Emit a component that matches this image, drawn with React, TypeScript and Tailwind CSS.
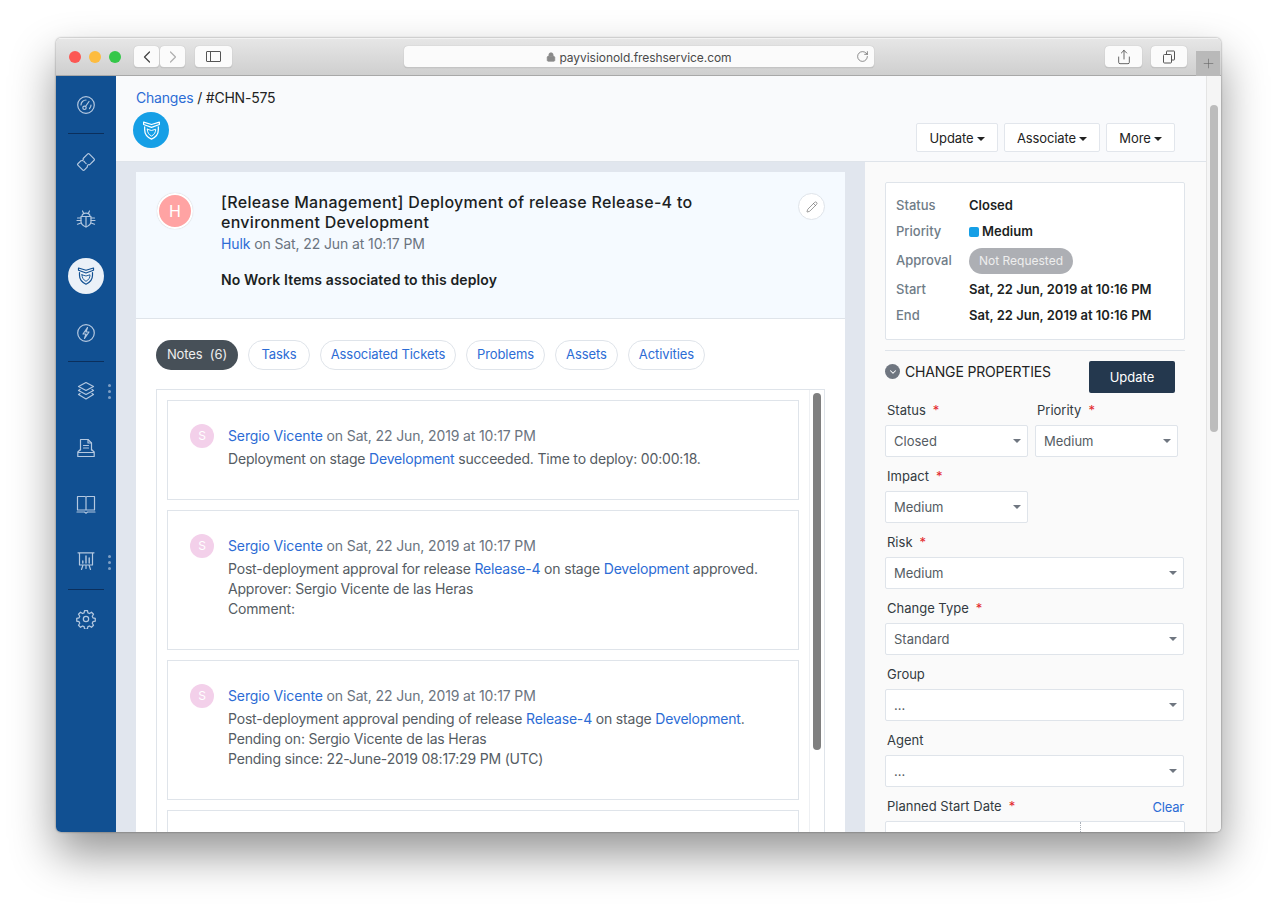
import React from "react";
import {
  ChevronDown,
  ChevronLeft,
  ChevronRight,
  Lock,
  Pencil,
  Plus,
  RotateCw,
  Share,
} from "lucide-react";

const iconProps = {
  fill: "none",
  stroke: "currentColor",
  strokeWidth: 1.2,
  strokeLinecap: "round" as const,
  strokeLinejoin: "round" as const,
};

function ShieldIcon({ size = 20 }: { size?: number }) {
  return (
    <svg width={size} height={size} viewBox="0 0 20 20" {...iconProps}>
      <path d="M2.500 2 10 4.300 17.500 2v2.300L10 7 2.500 4.300z" />
      <path d="M3.500 6.500v2.700c0 4 2.200 7 6.500 9 4.300-2 6.500-5 6.500-9V6.500" />
      <path d="M6 8.800 10 10l4-1.200c0 3-1.300 5-4 6.500-2.700-1.500-4-3.500-4-6.500z" strokeWidth={0.9} />
    </svg>
  );
}

function Gauge() {
  return (
    <svg width="20" height="20" viewBox="0 0 20 20" {...iconProps}>
      <circle cx="10" cy="10" r="8.300" />
      <circle cx="8.500" cy="12.800" r="1.700" />
      <path d="m9.500 11.500 3.500-5M5 10a5 5 0 0 1 5-5M13.500 13.500a5 5 0 0 0 1.500-3.500" />
    </svg>
  );
}

function Ticket() {
  return (
    <svg width="20" height="20" viewBox="0 0 20 20" {...iconProps}>
      <g transform="rotate(-45 10 10)">
        <path d="M2 6.500c0-.600.400-1 1-1h4.500a1.600 1.600 0 0 0 3 0H17c.600 0 1 .400 1 1v7c0 .600-.400 1-1 1h-6.500a1.600 1.600 0 0 0-3 0H3c-.600 0-1-.400-1-1z" />
        <path d="M9 8v4" strokeDasharray="1 1.200" />
      </g>
    </svg>
  );
}

function Bug() {
  return (
    <svg width="20" height="20" viewBox="0 0 20 20" {...iconProps}>
      <path d="M5 7.500h10v5c0 2.400-2.200 4.300-5 5.500-2.800-1.200-5-3.100-5-5.500z" />
      <path d="M6 7.500C6 5.500 7.800 4.200 10 4.200s4 1.300 4 3.300M6.500 2l1.300 2.600M13.500 2l-1.300 2.600M10 7.500v10.300" />
      <path d="M5 9H1.500M5 11.500H1M5 14l-3.500 1.200M15 9h3.500M15 11.500h4M15 14l3.500 1.200" />
    </svg>
  );
}

function Bolt() {
  return (
    <svg width="20" height="20" viewBox="0 0 20 20" {...iconProps}>
      <circle cx="10" cy="10" r="8.300" />
      <path d="M11.500 4.500 7 11h3l-1.500 4.500L13 9h-3z" />
    </svg>
  );
}

function Layers() {
  return (
    <svg width="20" height="20" viewBox="0 0 20 20" {...iconProps}>
      <path d="m10 1.500 7.500 4L10 9.500l-7.500-4z" />
      <path d="m4 8.500-1.500 1L10 13.500l7.500-4-1.500-1" />
      <path d="m4 12.500-1.500 1L10 18l7.500-4.500-1.500-1" />
    </svg>
  );
}

function Inbox() {
  return (
    <svg width="20" height="20" viewBox="0 0 20 20" {...iconProps}>
      <path d="M4.500 12V1.500h7.500l3.500 3.500v7" />
      <path d="M12 1.500V5h3.500M7.500 7.500h5M7.500 10h5" />
      <path d="M4.500 11.500 1.800 14v4.500h16.400V14l-2.700-2.500M1.800 14.500h16.400" />
    </svg>
  );
}

function Book() {
  return (
    <svg width="20" height="20" viewBox="0 0 20 20" {...iconProps}>
      <path d="M1.500 1.500H9c.600 0 1 .400 1 1V15H1.500zM18.500 1.500H11c-.600 0-1 .400-1 1V15h8.500z" />
      <path d="M1 17h7.500l1.500 1.200 1.500-1.200H19" />
    </svg>
  );
}

function Presentation() {
  return (
    <svg width="20" height="20" viewBox="0 0 20 20" {...iconProps}>
      <path d="M2 1.800h16M3.500 1.800V14h13V1.800M7 14l-1.500 4.500M13 14l1.500 4.500M10 14v3.500" />
      <path d="M6.800 12v-2M10 12V5M13.200 12V7" strokeWidth={1.4} />
    </svg>
  );
}

function Gear() {
  return (
    <svg width="20" height="20" viewBox="0 0 24 24" {...iconProps} strokeWidth={1.5}>
      <circle cx="12" cy="12" r="3.200" />
      <path d="M10.300 1.800h3.400l.600 2.800 1.900.800 2.400-1.500 2.400 2.400-1.500 2.400.800 1.900 2.800.600v3.400l-2.800.600-.800 1.900 1.500 2.400-2.400 2.400-2.400-1.500-1.900.800-.600 2.800h-3.400l-.600-2.800-1.900-.800-2.400 1.500-2.400-2.400 1.500-2.400-.800-1.900-2.800-.600v-3.400l2.800-.600.800-1.900-1.500-2.400 2.400-2.400 2.400 1.500 1.900-.800z" />
    </svg>
  );
}

function SideItem({
  height,
  children,
  dots,
}: {
  height: string;
  children: React.ReactNode;
  dots?: boolean;
}) {
  return (
    <div className={`relative flex items-center justify-center text-[#b4c8e0] ${height}`}>
      {children}
      {dots && (
        <div className="absolute top-[22px] right-[5px] flex flex-col gap-[3px]">
          <span className="h-[3px] w-[3px] rounded-full bg-[#7f9fc4]" />
          <span className="h-[3px] w-[3px] rounded-full bg-[#7f9fc4]" />
          <span className="h-[3px] w-[3px] rounded-full bg-[#7f9fc4]" />
        </div>
      )}
    </div>
  );
}

function SideDivider() {
  return <div className="mx-3 h-px bg-[#0b2f5c]" />;
}

function Sidebar() {
  return (
    <div className="flex w-[60px] shrink-0 flex-col bg-[#115092]">
      <SideItem height="h-[57px]"><Gauge /></SideItem>
      <SideDivider />
      <SideItem height="h-[56px]"><Ticket /></SideItem>
      <SideItem height="h-[57px]"><Bug /></SideItem>
      <SideItem height="h-[57px]">
        <div className="flex h-9 w-9 items-center justify-center rounded-full bg-[#ebf1f8] text-[#115092]">
          <ShieldIcon />
        </div>
      </SideItem>
      <SideItem height="h-[57px]"><Bolt /></SideItem>
      <SideDivider />
      <SideItem height="h-[57px]" dots><Layers /></SideItem>
      <SideItem height="h-[57px]"><Inbox /></SideItem>
      <SideItem height="h-[57px]"><Book /></SideItem>
      <SideItem height="h-[56px]" dots><Presentation /></SideItem>
      <SideDivider />
      <SideItem height="h-[57px]"><Gear /></SideItem>
    </div>
  );
}

function ToolbarButton({ className, children }: { className: string; children: React.ReactNode }) {
  return (
    <div className={`flex h-[22px] items-center justify-center rounded-[4px] border-b border-[#c4c4c4] bg-[#fbfbfb] shadow-[0_0_1px_rgba(0,0,0,0.25)] ${className}`}>
      {children}
    </div>
  );
}

function TabsGlyph() {
  return (
    <svg width="14" height="14" viewBox="0 0 14 14" fill="none" stroke="#555555" strokeWidth="1">
      <rect x="1.500" y="4.500" width="8" height="8.500" rx="1" />
      <path d="M4.500 4.500v-3c0-.300.200-.500.500-.500h7c.300 0 .500.200.500.500v8c0 .300-.200.500-.500.500H9.500" />
    </svg>
  );
}

function Toolbar() {
  return (
    <div className="flex h-[38px] shrink-0 items-center border-t border-b border-t-[#f2f2f2] border-b-[#a8a8a8] bg-gradient-to-b from-[#e6e6e6] to-[#cfcfcf] pl-[13px]">
      <span className="h-3 w-3 rounded-full bg-[#fc5753]" />
      <span className="ml-2 h-3 w-3 rounded-full bg-[#fdbc40]" />
      <span className="ml-2 h-3 w-3 rounded-full bg-[#34c749]" />
      <ToolbarButton className="ml-[13px] w-[25px]">
        <ChevronLeft size={20} strokeWidth={1.5} className="text-[#444444]" />
      </ToolbarButton>
      <ToolbarButton className="ml-px w-[25px]">
        <ChevronRight size={20} strokeWidth={1.5} className="text-[#b0b0b0]" />
      </ToolbarButton>
      <ToolbarButton className="ml-[10px] w-[37px]">
        <div className="flex h-[11px] w-[15px] rounded-[1px] border border-[#555555]">
          <span className="w-[4px] border-r border-[#555555]" />
        </div>
      </ToolbarButton>
      <ToolbarButton className="relative ml-[172px] w-[470px]">
        <Lock size={10} className="mr-[3px] fill-[#8a8a8a] text-[#8a8a8a]" />
        <span className="pt-[2px] text-[12px] tracking-[-0.05px] text-[#4a4a4a]">payvisionold.freshservice.com</span>
        <RotateCw size={13} strokeWidth={1.2} className="absolute right-[5px] text-[#555555]" />
      </ToolbarButton>
      <ToolbarButton className="ml-[231px] w-[37px]">
        <Share size={16} strokeWidth={1.2} className="text-[#444444]" />
      </ToolbarButton>
      <ToolbarButton className="ml-[9px] w-[36px]">
        <TabsGlyph />
      </ToolbarButton>
      <div className="mt-[12px] ml-[9px] flex h-[25px] w-[24px] items-center justify-center bg-[#b9b9b9]">
        <Plus size={15} strokeWidth={1} className="text-[#666666]" />
      </div>
    </div>
  );
}

const headerBtn =
  "flex h-[29px] items-center justify-center gap-[3px] rounded-[2px] border border-[#e2e6ec] bg-white pt-[2px] text-[13px] tracking-[-0.1px] text-[#222222]";

function Caret() {
  return <span className="h-0 w-0 border-x-[4px] border-t-[4px] border-x-transparent border-t-[#222222]" />;
}

function PageHeader() {
  return (
    <div className="flex h-[86px] shrink-0 justify-between border-b border-[#dfe4ea] bg-[#f9fafc] pr-[31px] pl-[17px]">
      <div>
        <div className="mt-[13px] ml-[3px] text-[14px] leading-[18px] tracking-[-0.2px] text-[#222222]">
          <span className="text-[#2c6cd5]">Changes</span> / #CHN-575
        </div>
        <div className="mt-[5px] flex h-9 w-9 items-center justify-center rounded-full bg-[#169fe6] text-white">
          <ShieldIcon size={21} />
        </div>
      </div>
      <div className="mt-[47px] flex gap-[6px]">
        <button className={`${headerBtn} w-[82px]`}>Update <Caret /></button>
        <button className={`${headerBtn} w-[96px]`}>Associate <Caret /></button>
        <button className={`${headerBtn} w-[69px]`}>More <Caret /></button>
      </div>
    </div>
  );
}

const tabs = [
  { label: "Tasks", width: "w-[62px]" },
  { label: "Associated Tickets", width: "w-[136px]" },
  { label: "Problems", width: "w-[79px]" },
  { label: "Assets", width: "w-[63px]" },
  { label: "Activities", width: "w-[77px]" },
];

function Tabs() {
  return (
    <div className="flex h-[30px] gap-[10px] text-[13px] tracking-[-0.08px]">
      <div className="flex w-[82px] items-center justify-center rounded-full bg-[#475058] text-[#eeeeee]">
        Notes&nbsp;&nbsp;(6)
      </div>
      {tabs.map((tab) => (
        <div
          key={tab.label}
          className={`flex items-center justify-center rounded-full border border-[#dfe4ea] text-[#2c6cd5] ${tab.width}`}
        >
          {tab.label}
        </div>
      ))}
    </div>
  );
}

function Link({ children }: { children: React.ReactNode }) {
  return <span className="text-[#2c6cd5]">{children}</span>;
}

function Note({ height, children }: { height: string; children: React.ReactNode }) {
  return (
    <div className={`flex shrink-0 border border-[#dfe4ea] pt-[23px] pl-[22px] ${height}`}>
      <div className="flex h-6 w-6 shrink-0 items-center justify-center rounded-full bg-[#f3d0ea] text-[12px] text-white">
        S
      </div>
      <div className="ml-[14px] text-[14px] leading-[20px] tracking-[-0.18px] text-[#555c63]">
        <div className="mt-[2px] mb-[3px] tracking-[-0.13px] text-[#6b7480]">
          <Link>Sergio Vicente</Link> on Sat, 22 Jun, 2019 at 10:17 PM
        </div>
        {children}
      </div>
    </div>
  );
}

function MainColumn() {
  return (
    <div className="min-w-0 flex-1 overflow-hidden bg-[#e1e6ee] px-5 pt-[10px]">
      <div className="h-[700px] rounded-t-[2px] bg-white">
        <div className="flex h-[147px] border-b border-[#dfe4ea] bg-[#f5faff] pt-[20px] pr-[20px] pl-[21px]">
          <div className="mt-px flex h-9 w-9 shrink-0 items-center justify-center rounded-full border-2 border-white bg-[#ffa3a3] text-[16px] text-white shadow-[0_0_1px_rgba(0,0,0,0.25)]">
            H
          </div>
          <div className="ml-[28px] flex-1">
            <h1 className="w-[520px] text-[16px] leading-[20px] font-medium tracking-[0.3px] text-[#1c1f23]">
              [Release Management] Deployment of release Release-4 to environment Development
            </h1>
            <div className="mt-[2px] text-[14px] leading-[20px] tracking-[-0.11px] text-[#6b7480]">
              <Link>Hulk</Link> on Sat, 22 Jun at 10:17 PM
            </div>
            <div className="mt-[16px] text-[14px] leading-[20px] font-semibold tracking-[0.12px] text-[#1c1f23]">
              No Work Items associated to this deploy
            </div>
          </div>
          <div className="mt-px flex h-[27px] w-[27px] shrink-0 items-center justify-center rounded-full border border-[#dfe4ea] bg-white">
            <Pencil size={12} strokeWidth={1.3} className="text-[#666666]" />
          </div>
        </div>
        <div className="px-5 pt-[21px]">
          <Tabs />
          <div className="relative mt-[19px] flex h-[480px] flex-col gap-[10px] overflow-hidden border border-[#dfe4ea] pt-[10px] pr-[25px] pl-[10px]">
            <Note height="h-[100px]">
              <div>
                Deployment on stage <Link>Development</Link> succeeded. Time to deploy: 00:00:18.
              </div>
            </Note>
            <Note height="h-[140px]">
              <div>
                Post-deployment approval for release <Link>Release-4</Link> on stage{" "}
                <Link>Development</Link> approved.
              </div>
              <div>Approver: Sergio Vicente de las Heras</div>
              <div>Comment:</div>
            </Note>
            <Note height="h-[140px]">
              <div>
                Post-deployment approval pending of release <Link>Release-4</Link> on stage{" "}
                <Link>Development</Link>.
              </div>
              <div>Pending on: Sergio Vicente de las Heras</div>
              <div>Pending since: 22-June-2019 08:17:29 PM (UTC)</div>
            </Note>
            <div className="h-[140px] shrink-0 border border-[#dfe4ea]" />
            <div className="absolute top-0 right-0 bottom-0 w-[15px] border-l border-[#eef0f3] bg-white">
              <div className="mx-auto mt-[3px] h-[357px] w-[8px] rounded-full bg-[#7f7f7f]" />
            </div>
          </div>
        </div>
      </div>
    </div>
  );
}

function SummaryRow({ label, children, height }: { label: string; children: React.ReactNode; height: string }) {
  return (
    <div className={`flex items-center ${height}`}>
      <span className="w-[73px] shrink-0 text-[13px] font-medium text-[#6f7c87]">{label}</span>
      <div className="text-[13px] font-semibold text-[#1c1f23]">{children}</div>
    </div>
  );
}

function Field({
  label,
  value,
  required,
  className,
}: {
  label: string;
  value: string;
  required?: boolean;
  className: string;
}) {
  return (
    <div className={className}>
      <div className="ml-[2px] flex h-[25px] items-start text-[13px] leading-[20px] text-[#333a41]">
        {label}
        {required && <span className="ml-[7px] text-[#e3262b]">*</span>}
      </div>
      <div className="flex h-[32px] items-center justify-between rounded-[2px] border border-[#dfe4ea] bg-white pt-[2px] pr-[6px] pl-[8px] text-[13px] text-[#555c63]">
        {value}
        <span className="mb-[2px] h-0 w-0 border-x-[4px] border-t-[4px] border-x-transparent border-t-[#6f7680]" />
      </div>
    </div>
  );
}

function RightPanel() {
  return (
    <div className="flex w-[341px] shrink-0 flex-col overflow-hidden bg-[#fafafa] pt-5 pr-[21px] pl-5">
      <div className="h-[158px] shrink-0 rounded-[2px] border border-[#dfe4ea] bg-white pt-[10px] pl-[10px]">
        <SummaryRow label="Status" height="h-[26px]">Closed</SummaryRow>
        <SummaryRow label="Priority" height="h-[26px]">
          <span className="flex items-center gap-[3px]">
            <span className="h-[10px] w-[10px] rounded-[2px] bg-[#169fe6]" />
            Medium
          </span>
        </SummaryRow>
        <SummaryRow label="Approval" height="h-[32px]">
          <span className="flex h-[26px] w-[104px] items-center justify-center rounded-full bg-[#adafb4] text-[12px] font-normal text-[#eeeeee]">
            Not Requested
          </span>
        </SummaryRow>
        <SummaryRow label="Start" height="h-[26px]">Sat, 22 Jun, 2019 at 10:16 PM</SummaryRow>
        <SummaryRow label="End" height="h-[26px]">Sat, 22 Jun, 2019 at 10:16 PM</SummaryRow>
      </div>
      <div className="mt-[10px] shrink-0 border-t border-[#dfe4ea] pt-[10px]">
        <div className="flex justify-between pr-[10px]">
          <div className="flex h-[21px] items-center">
            <span className="flex h-[15px] w-[15px] items-center justify-center rounded-full bg-[#6f7680] text-white">
              <ChevronDown size={10} strokeWidth={2.5} />
            </span>
            <span className="ml-[5px] text-[14px] tracking-[-0.18px] text-[#222222]">CHANGE PROPERTIES</span>
          </div>
          <button className="h-8 w-[86px] rounded-[2px] bg-[#24384e] pt-[2px] text-[13px] text-white">Update</button>
        </div>
        <div className="mt-[7px] flex gap-[7px]">
          <Field label="Status" value="Closed" required className="w-[143px]" />
          <Field label="Priority" value="Medium" required className="w-[143px]" />
        </div>
        <div className="mt-[9px] flex flex-col gap-[9px]">
          <Field label="Impact" value="Medium" required className="w-[143px]" />
          <Field label="Risk" value="Medium" required className="w-[299px]" />
          <Field label="Change Type" value="Standard" required className="w-[299px]" />
          <Field label="Group" value="..." className="w-[299px]" />
          <Field label="Agent" value="..." className="w-[299px]" />
        </div>
        <div className="mt-[9px] w-[300px]">
          <div className="ml-[2px] flex h-[25px] items-start justify-between text-[13px] leading-[20px] text-[#333a41]">
            <span>
              Planned Start Date<span className="ml-[7px] text-[#e3262b]">*</span>
            </span>
            <span className="mt-px pr-px text-[13px] tracking-[-0.2px] text-[#2c6cd5]">Clear</span>
          </div>
          <div className="flex h-[32px] rounded-t-[2px] border border-[#dfe4ea] bg-white">
            <div className="w-[195px] border-r border-dotted border-[#aab0b8]" />
          </div>
        </div>
      </div>
    </div>
  );
}

function PageScrollbar() {
  return (
    <div className="w-[15px] shrink-0 border-l border-[#e4e4e4] bg-[#f5f5f5]">
      <div className="mx-auto mt-[29px] h-[327px] w-[8px] rounded-full bg-[#bcbcbc]" />
    </div>
  );
}

export default function App() {
  return (
    <div
      className="h-[906px] w-[1277px] overflow-hidden bg-white pt-[38px] pl-[56px]"
      style={{ fontFamily: "Inter, 'Noto Sans', sans-serif" }}
    >
      <div className="flex h-[794px] w-[1165px] flex-col overflow-hidden rounded-[5px] shadow-[0_22px_45px_rgba(0,0,0,0.42),0_0_2px_rgba(0,0,0,0.5)]">
        <Toolbar />
        <div className="flex min-h-0 flex-1">
          <Sidebar />
          <div className="flex min-w-0 flex-1 flex-col">
            <PageHeader />
            <div className="flex min-h-0 flex-1">
              <MainColumn />
              <RightPanel />
            </div>
          </div>
          <PageScrollbar />
        </div>
      </div>
    </div>
  );
}
